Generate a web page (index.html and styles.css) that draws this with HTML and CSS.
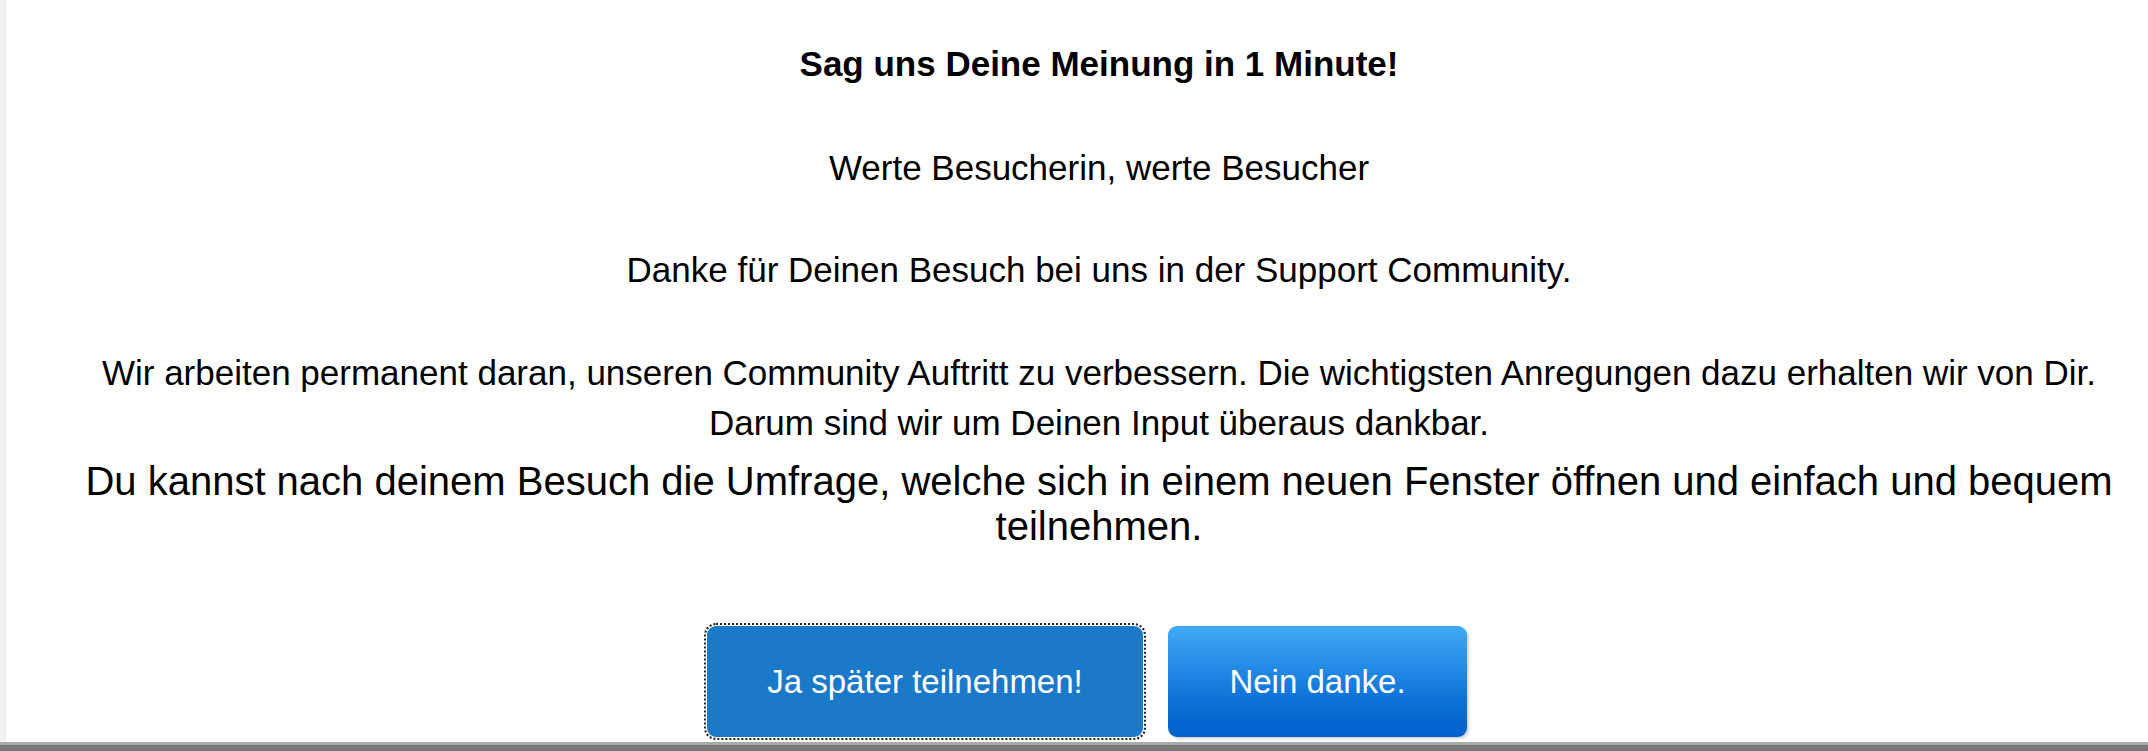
FILE: index.html
```html
<!DOCTYPE html>
<html lang="de">
<head>
<meta charset="UTF-8">
<meta name="viewport" content="width=device-width, initial-scale=1.0">
<title>Umfrage</title>
<link rel="stylesheet" href="styles.css">
</head>
<body>
<div id="frame">
    <div id="survey">
        <h1 id="title">Sag uns Deine Meinung in 1 Minute!</h1>
        <p class="line greet">Werte Besucherin, werte Besucher</p>
        <p class="line thanks">Danke für Deinen Besuch bei uns in der Support Community.</p>
        <p class="line intro">Wir arbeiten permanent daran, unseren Community Auftritt zu verbessern. Die wichtigsten Anregungen dazu erhalten wir von Dir.<br>Darum sind wir um Deinen Input überaus dankbar.</p>
        <p class="line invite">Du kannst nach deinem Besuch die Umfrage, welche sich in einem neuen Fenster öffnen und einfach und bequem teilnehmen.</p>
        <div id="actions">
            <!-- erster Button hat den Fokus -->
            <button class="btn btn-later">Ja später teilnehmen!</button>
            <button class="btn btn-no">Nein danke.</button>
        </div>
    </div>
</div>
<div id="taskbar"></div>
</body>
</html>
```

FILE: styles.css
```css
html, body {
    margin: 0;
    padding: 0;
    background: #fff;
}

body {
    font-family: "Liberation Sans", Arial, sans-serif;
    color: #000;
    overflow: hidden;
}

#frame {
    height: 742px;
    border-left: 6px solid #f1f1f1;
    box-sizing: border-box;
}

#survey {
    padding: 44px 0 0 44px;
    text-align: center;
}

#title {
    font-size: 35px;
    line-height: 40px;
    font-weight: bold;
    margin: 0;
}

.line {
    margin: 0;
    font-size: 35px;
    line-height: 40px;
}

.greet {
    margin-top: 64px;
}

.thanks {
    margin-top: 62px;
}

.intro {
    margin-top: 58px;
    line-height: 50px;
}

.invite {
    margin-top: 11px;
    font-size: 40px;
    line-height: 45px;
}

#actions {
    display: flex;
    justify-content: center;
    gap: 25px;
    margin-top: 77px;
    padding-right: 24px;
}

.btn {
    font-family: "Liberation Sans", Arial, sans-serif;
    font-size: 33px;
    color: #fff;
    border: none;
    border-radius: 9px;
    cursor: pointer;
    height: 111px;
}

.btn-later {
    width: 436px;
    background: #1b79ca;
    outline: 2px dotted #222;
    outline-offset: 1px;
}

.btn-no {
    width: 299px;
    background: linear-gradient(to bottom, #3fabf6, #0a6fd6 70%, #0061cc);
    box-shadow: 2px 2px 2px #d6d6d6;
}

#taskbar {
    height: 9px;
    background: linear-gradient(to bottom, #aaa 0, #aaa 3px, #7a7a7a 3px, #777 100%);
}
```
